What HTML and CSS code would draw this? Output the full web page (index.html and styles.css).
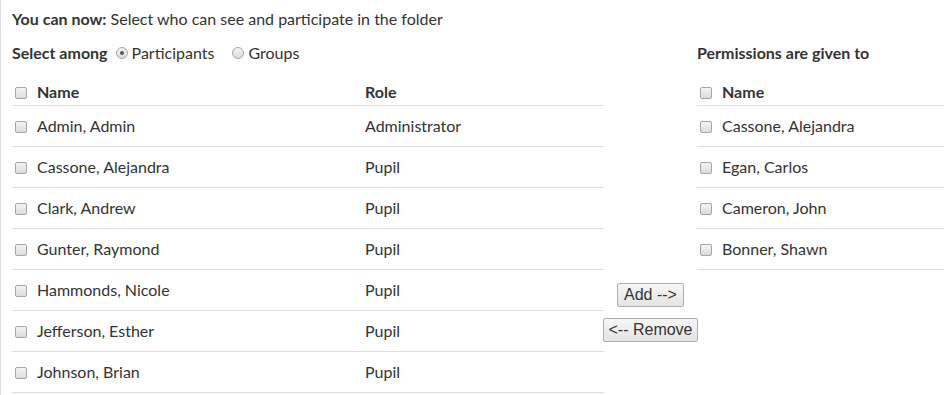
FILE: index.html
```html
<!DOCTYPE html>
<html lang="en">

<head>
    <meta charset="UTF-8">
    <meta name="viewport" content="width=device-width, initial-scale=1.0">
    <title>Folder permissions</title>
    <link rel="stylesheet" href="styles.css">
</head>

<body>
    <div class="page">
        <p class="intro"><b>You can now:</b> Select who can see and participate in the folder</p>

        <div class="picker">
            <div class="col-left">
                <div class="select-row">
                    <b>Select among</b>
                    <label><input type="radio" name="among" checked>Participants</label>
                    <label class="groups"><input type="radio" name="among">Groups</label>
                </div>
                <table class="list">
                    <thead>
                        <tr>
                            <th class="name-col"><input type="checkbox">Name</th>
                            <th>Role</th>
                        </tr>
                    </thead>
                    <tbody>
                        <tr><td class="name-col"><input type="checkbox">Admin, Admin</td><td>Administrator</td></tr>
                        <tr><td class="name-col"><input type="checkbox">Cassone, Alejandra</td><td>Pupil</td></tr>
                        <tr><td class="name-col"><input type="checkbox">Clark, Andrew</td><td>Pupil</td></tr>
                        <tr><td class="name-col"><input type="checkbox">Gunter, Raymond</td><td>Pupil</td></tr>
                        <tr><td class="name-col"><input type="checkbox">Hammonds, Nicole</td><td>Pupil</td></tr>
                        <tr><td class="name-col"><input type="checkbox">Jefferson, Esther</td><td>Pupil</td></tr>
                        <tr><td class="name-col"><input type="checkbox">Johnson, Brian</td><td>Pupil</td></tr>
                    </tbody>
                </table>
            </div>

            <div class="col-middle">
                <button>Add --&gt;</button>
                <button>&lt;-- Remove</button>
            </div>

            <div class="col-right">
                <div class="select-row"><b>Permissions are given to</b></div>
                <table class="list">
                    <thead>
                        <tr><th><input type="checkbox">Name</th></tr>
                    </thead>
                    <tbody>
                        <tr><td><input type="checkbox">Cassone, Alejandra</td></tr>
                        <tr><td><input type="checkbox">Egan, Carlos</td></tr>
                        <tr><td><input type="checkbox">Cameron, John</td></tr>
                        <tr><td><input type="checkbox">Bonner, Shawn</td></tr>
                    </tbody>
                </table>
            </div>
        </div>
    </div>
</body>

</html>
```

FILE: styles.css
```css
* {
    margin: 0;
    padding: 0;
    box-sizing: border-box;
}

body {
    font-family: Lato, 'Open Sans', sans-serif;
    font-size: 16px;
    color: #333;
    background: #fff;
}

.page {
    border-left: 1px solid #ddd;
    padding: 10px 0 0 11px;
    min-height: 395px;
}

.intro {
    line-height: 18px;
}

.picker {
    display: grid;
    grid-template-columns: 592px 93px 1fr;
    margin-top: 16px;
}

.select-row {
    display: flex;
    align-items: center;
    height: 18px;
    line-height: 18px;
    margin-bottom: 17px;
}

.select-row label {
    display: flex;
    align-items: center;
    margin-left: 8px;
}

.select-row .groups {
    margin-left: 18px;
}

input[type="radio"],
input[type="checkbox"] {
    appearance: none;
    -webkit-appearance: none;
    width: 12px;
    height: 12px;
    border: 1px solid #a6a6a6;
    background: linear-gradient(#f4f4f4, #dcdcdc);
    margin: 0 4px 0 0;
    flex: none;
    vertical-align: -1px;
}

input[type="checkbox"] {
    border-radius: 2px;
    margin: 0 10px 0 3px;
}

input[type="radio"] {
    border-radius: 50%;
    position: relative;
}

input[type="radio"]:checked::after {
    content: '';
    position: absolute;
    left: 3px;
    top: 3px;
    width: 4px;
    height: 4px;
    border-radius: 50%;
    background: #555;
}

.list {
    width: 100%;
    border-collapse: collapse;
}

.list th {
    text-align: left;
    font-weight: bold;
    height: 26px;
    padding-bottom: 1px;
    border-bottom: 1px solid #ddd;
}

.list td {
    height: 41px;
    padding-bottom: 1px;
    border-bottom: 1px solid #ddd;
}

.list .name-col {
    width: 353px;
}

.col-middle {
    display: flex;
    flex-direction: column;
    align-items: center;
    gap: 11px;
    padding-top: 239px;
}

.col-middle button {
    font-family: 'Liberation Sans', Arial, sans-serif;
    font-size: 16px;
    color: #333;
    height: 24px;
    padding: 0 4px;
    white-space: nowrap;
    border: 1px solid #adadad;
    border-radius: 2px;
    background: linear-gradient(#f6f6f6, #e4e4e4);
}

.col-middle button:first-child {
    padding: 0 6px;
}
```
